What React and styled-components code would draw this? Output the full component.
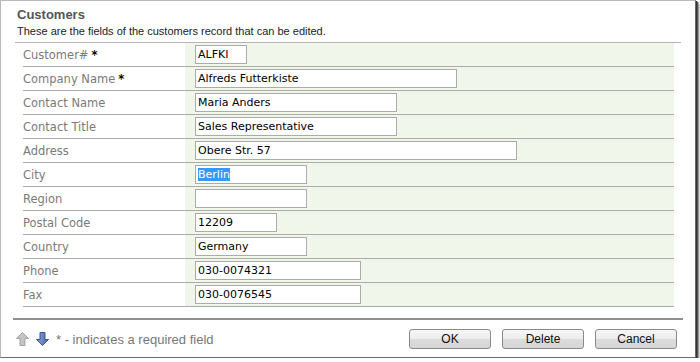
import React from "react";
import styled, { createGlobalStyle } from "styled-components";

const GlobalStyle = createGlobalStyle`
  body {
    margin: 0;
    background: #ffffff;
    font-family: "DejaVu Sans", Verdana, sans-serif;
  }
`;

const Window = styled.div`
  box-sizing: border-box;
  width: 696px;
  height: 358px;
  border: 1px solid #b9b9b9;
  border-right-color: #6a6a6a;
  border-bottom-color: #6a6a6a;
  background: #ffffff;
  box-shadow: 1px 1px 0 #333, 2px 2px 1px #555, 3px 3px 2px rgba(0, 0, 0, 0.5);
  display: flex;
  flex-direction: column;
`;

const Header = styled.div`
  height: 41px;
  padding: 6px 16px 0;
  box-sizing: border-box;
`;

const Title = styled.div`
  font-family: "Liberation Sans", Arial, sans-serif;
  font-weight: bold;
  font-size: 13px;
  color: #555;
  line-height: 15px;
`;

const Description = styled.div`
  font-family: "Liberation Sans", Arial, sans-serif;
  font-size: 11px;
  color: #222;
  line-height: 15px;
  margin-top: 2px;
`;

const Divider = styled.div`
  margin: 0 14px;
  border-top: 1px solid #b4b4b4;
`;

const FieldList = styled.div`
  margin: 0 21px 0 22px;
`;

const Row = styled.div`
  display: grid;
  grid-template-columns: 162px 1fr;
  height: 24px;
  box-sizing: border-box;
  border-bottom: 1px solid #ababab;
`;

const Label = styled.div`
  display: flex;
  align-items: center;
  font-size: 11.5px;
  color: #7a7a7a;
`;

const Required = styled.span`
  color: #000;
  font-weight: bold;
  margin-left: 3px;
`;

const Value = styled.div`
  background: #f1f6eb;
  display: flex;
  align-items: center;
  padding-left: 10px;
`;

const Field = styled.div`
  box-sizing: border-box;
  width: ${(p) => p.w}px;
  height: 19px;
  border: 1px solid #ababab;
  background: #fff;
  font-size: 11px;
  color: #000;
  padding-left: 2px;
  display: flex;
  align-items: center;
  white-space: nowrap;
`;

const Selected = styled.span`
  background: #3399ff;
  color: #fff;
`;

const FooterLine = styled.div`
  margin: 11px 12px 0;
  height: 2px;
  background: #8f8f8f;
`;

const Footer = styled.div`
  display: flex;
  align-items: center;
  padding: 9px 18px 0 15px;
`;

const Arrows = styled.div`
  display: flex;
  gap: 7px;
  align-items: center;
`;

const Hint = styled.div`
  margin-left: 7px;
  font-family: "Liberation Sans", Arial, sans-serif;
  font-size: 13px;
  color: #777;
  flex: 1;
`;

const Buttons = styled.div`
  display: flex;
  gap: 11px;
`;

const Button = styled.button`
  width: 82px;
  height: 20px;
  border: 1px solid #8a8a8a;
  border-radius: 3px;
  background: linear-gradient(#f6f6f6 0%, #ececec 50%, #dcdcdc 51%, #d6d6d6 100%);
  font-family: "Liberation Sans", Arial, sans-serif;
  font-size: 12px;
  color: #111;
  padding: 0;
`;

const UpArrow = () => (
  <svg width="13" height="14" viewBox="0 0 13 14">
    <path d="M6.5 0.5 L12.5 6.5 L9 6.5 L9 13.5 L4 13.5 L4 6.5 L0.5 6.5 Z" fill="#c4c4c4" stroke="#a3a3a3" />
  </svg>
);

const DownArrow = () => (
  <svg width="13" height="14" viewBox="0 0 13 14">
    <defs>
      <linearGradient id="blueArrow" x1="0" x2="1" y1="0" y2="0">
        <stop offset="0" stopColor="#8ea6d8" />
        <stop offset="1" stopColor="#4a64a8" />
      </linearGradient>
    </defs>
    <path d="M4 0.5 L9 0.5 L9 7.5 L12.5 7.5 L6.5 13.5 L0.5 7.5 L4 7.5 Z" fill="url(#blueArrow)" stroke="#3d5596" />
  </svg>
);

const fields = [
  { label: "Customer#", value: "ALFKI", w: 52, required: true },
  { label: "Company Name", value: "Alfreds Futterkiste", w: 262, required: true },
  { label: "Contact Name", value: "Maria Anders", w: 202 },
  { label: "Contact Title", value: "Sales Representative", w: 202 },
  { label: "Address", value: "Obere Str. 57", w: 322 },
  { label: "City", value: "Berlin", w: 112, selected: true },
  { label: "Region", value: "", w: 112 },
  { label: "Postal Code", value: "12209", w: 82 },
  { label: "Country", value: "Germany", w: 112 },
  { label: "Phone", value: "030-0074321", w: 166 },
  { label: "Fax", value: "030-0076545", w: 166 },
];

export default function App() {
  return (
    <>
      <GlobalStyle />
      <Window>
        <Header>
          <Title>Customers</Title>
          <Description>These are the fields of the customers record that can be edited.</Description>
        </Header>
        <Divider />
        <FieldList>
          {fields.map((f) => (
            <Row key={f.label}>
              <Label>
                {f.label}
                {f.required && <Required>*</Required>}
              </Label>
              <Value>
                <Field w={f.w}>{f.selected ? <Selected>{f.value}</Selected> : f.value}</Field>
              </Value>
            </Row>
          ))}
        </FieldList>
        <FooterLine />
        <Footer>
          <Arrows>
            <UpArrow />
            <DownArrow />
          </Arrows>
          <Hint>* - indicates a required field</Hint>
          <Buttons>
            <Button>OK</Button>
            <Button>Delete</Button>
            <Button>Cancel</Button>
          </Buttons>
        </Footer>
      </Window>
    </>
  );
}
